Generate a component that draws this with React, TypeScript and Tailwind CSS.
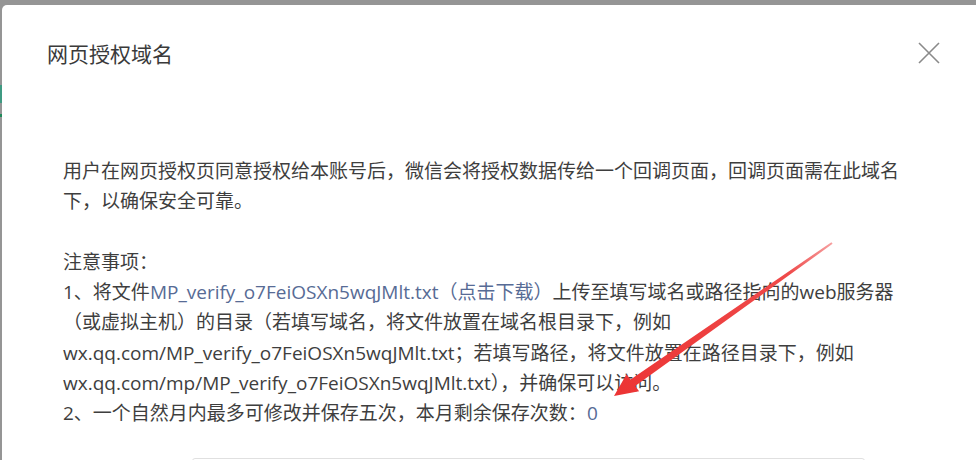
import React from "react";

const FONT = {
  fontFamily: '"Open Sans", "Noto Sans CJK SC", sans-serif',
};

function Arrow() {
  return (
    <svg
      className="absolute left-0 top-0 pointer-events-none"
      width={976}
      height={460}
      viewBox="0 0 976 460"
    >
      <defs>
        <linearGradient id="ag" x1="832" y1="243" x2="615" y2="395" gradientUnits="userSpaceOnUse">
          <stop offset="0" stopColor="#f6a0a0" />
          <stop offset="0.2" stopColor="#ef4a4a" />
          <stop offset="1" stopColor="#ec3434" />
        </linearGradient>
      </defs>
      <polygon
        points="614,396 626.5,374.2 630.6,379.5 831.4,242.2 832.6,243.8 635.2,386.1 639.1,391.2"
        fill="url(#ag)"
      />
    </svg>
  );
}

export default function App() {
  return (
    <div
      className="relative w-[976px] h-[460px] overflow-hidden bg-[#959595] flex"
      style={FONT}
    >
      <div className="w-[2px] flex flex-col pt-[85px]">
        <div className="h-[18px] bg-[#3f9a82]" />
        <div className="h-[11px]" />
        <div className="h-[3px] bg-[#1f8a5a]" />
      </div>
      <div className="flex-1 mt-[5px] bg-white rounded-tl-[5px] pl-[45px] pt-[34px] text-[#353535]">
        <div className="flex items-center justify-between h-[30px]">
          <div className="text-[21px] leading-[30px] text-[#3a3a3a]">网页授权域名</div>
          <svg width="22" height="22" viewBox="0 0 22 22" className="mr-[36px] -mt-[3px]">
            <path d="M1 1 L21 21 M21 1 L1 21" stroke="#8a8a8a" strokeWidth="1.6" fill="none" />
          </svg>
        </div>
        <div className="mt-[87px] pl-[16px] text-[19px] leading-[30.25px] text-[#3e3e3e]">
          <p>用户在网页授权页同意授权给本账号后，微信会将授权数据传给一个回调页面，回调页面需在此域名</p>
          <p>下，以确保安全可靠。</p>
          <p className="mt-[30.25px]">注意事项：</p>
          <p className="whitespace-nowrap">
            1、将文件<span className="text-[#576b95]">MP_verify_o7FeiOSXn5wqJMlt.txt（点击下载）</span>上传至填写域名或路径指向的web服务器
          </p>
          <p className="whitespace-nowrap">（或虚拟主机）的目录（若填写域名，将文件放置在域名根目录下，例如</p>
          <p className="whitespace-nowrap">wx.qq.com/MP_verify_o7FeiOSXn5wqJMlt.txt；若填写路径，将文件放置在路径目录下，例如</p>
          <p className="whitespace-nowrap">wx.qq.com/mp/MP_verify_o7FeiOSXn5wqJMlt.txt），并确保可以访问。</p>
          <p className="whitespace-nowrap">
            2、一个自然月内最多可修改并保存五次，本月剩余保存次数：<span className="text-[#576b95]">0</span>
          </p>
          <div className="mt-[30px] ml-[129px] w-[673px] h-[40px] border border-[#e0e0e0] rounded-t-[3px]" />
        </div>
      </div>
      <Arrow />
    </div>
  );
}
